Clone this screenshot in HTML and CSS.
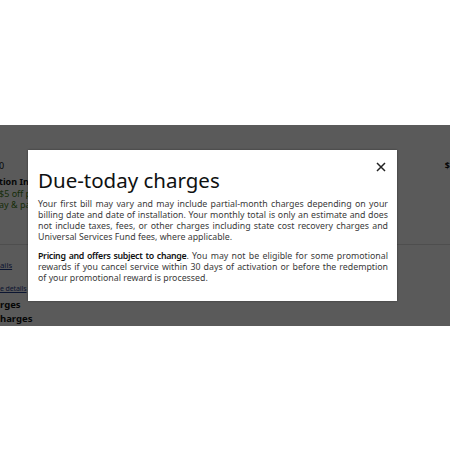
FILE: index.html
```html
<!DOCTYPE html>
<html>
<head>
<meta charset="utf-8">
<link rel="stylesheet" href="styles.css">
</head>
<body>
<div class="top"></div>
<div class="stage">
  <div class="page">
    <div class="row">
      <div class="left">
        <div class="t0">0</div>
        <div class="tb">tion Included</div>
        <div class="tg">$5 off promo</div>
        <div class="tg">ay &amp; pay later</div>
      </div>
      <div class="price">$</div>
    </div>
    <div class="sep"></div>
    <div class="links">
      <div class="lnk l1">ails</div>
      <div class="lnk l2">e details</div>
      <div class="hb h1">rges</div>
      <div class="hb h2">harges</div>
    </div>
  </div>
  <div class="overlay">
    <div class="modal">
      <button class="close" aria-label="Close">
        <svg width="10" height="10" viewBox="0 0 10 10"><path d="M1 1L9 9M9 1L1 9" stroke="#222" stroke-width="1.5" fill="none"/></svg>
      </button>
      <h1 class="title">Due-today charges</h1>
      <p class="para">Your first bill may vary and may include partial-month charges depending on your billing date and date of installation. Your monthly total is only an estimate and does not include taxes, fees, or other charges including state cost recovery charges and Universal Services Fund fees, where applicable.</p>
      <p class="para"><b>Pricing and offers subject to change</b>. You may not be eligible for some promotional rewards if you cancel service within 30 days of activation or before the redemption of your promotional reward is processed.</p>
    </div>
  </div>
</div>
</body>
</html>
```
FILE: styles.css
```css
html, body { margin: 0; padding: 0; background: #fff; }
body { font-family: "Noto Sans", "Open Sans", sans-serif; width: 450px; height: 450px; overflow: hidden; }
.top { height: 125px; }
.stage { position: relative; height: 201px; overflow: hidden; background: #fff; }
.page { color: #0f1111; font-size: 9px; }
.row { display: flex; justify-content: space-between; padding-top: 35px; }
.left { margin-left: -1px; white-space: nowrap; }
.t0 { line-height: 12px; height: 16px; }
.tb { font-weight: 700; line-height: 12px; }
.tg { color: #3f7f16; line-height: 11px; }
.price { font-weight: 700; margin-right: 0; line-height: 12px; }
.sep { height: 1px; background: #ddd; margin-top: 34px; }
.links { padding-top: 14px; white-space: nowrap; }
.lnk { color: #1f3c8c; text-decoration: underline; font-size: 7.8px; line-height: 12px; }
.l2 { margin-top: 12px; font-size: 7px; letter-spacing: -0.1px; }
.hb { font-weight: 700; font-size: 9.5px; line-height: 14px; }
.h1 { margin-top: 3px; }
.overlay { position: absolute; inset: 0; background: rgba(0,0,0,0.647); display: flex; align-items: center; padding-left: 28px; }
.modal { position: relative; background: #fff; width: 369px; height: 151px; box-sizing: border-box; padding: 16px 9px 0 10px; box-shadow: 0 0 2px rgba(0,0,0,0.4); }
.close { position: absolute; right: 11px; top: 12px; border: 0; background: none; padding: 0; width: 10px; height: 10px; display: block; }
.close svg { display: block; }
.title { margin: 0; font-weight: 400; font-size: 20.5px; line-height: 28px; color: #0f1111; }
.para { margin: 5px 0 0; font-size: 8.8px; line-height: 11px; color: #3a3a3a; text-align: justify; }
.para + .para { margin-top: 8px; }
.para b { color: #0f1111; font-weight: 600; letter-spacing: -0.3px; }
```
